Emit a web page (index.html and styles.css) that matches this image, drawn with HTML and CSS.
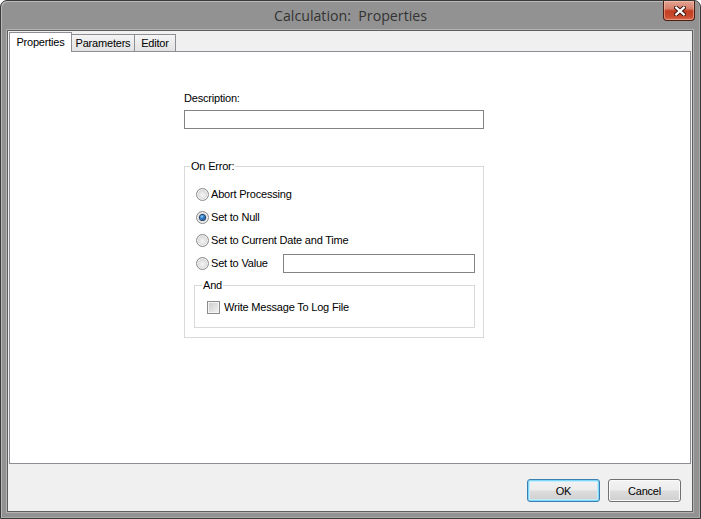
FILE: index.html
```html
<!DOCTYPE html>
<html>
<head>
<meta charset="utf-8">
<title>Calculation: Properties</title>
<link rel="stylesheet" href="styles.css">
</head>
<body>
<div class="window">
  <div class="titlebar">
    <div class="title">Calculation:&nbsp; Properties</div>
    <button class="close" aria-label="Close">
      <svg width="12" height="10" viewBox="0 0 12 10">
        <path d="M2.2 1.6 L9.8 8.4 M9.8 1.6 L2.2 8.4" stroke="#3a140c" stroke-width="4.2" stroke-linecap="square" fill="none"/>
        <path d="M2.2 1.6 L9.8 8.4 M9.8 1.6 L2.2 8.4" stroke="#ffffff" stroke-width="2.2" stroke-linecap="square" fill="none"/>
      </svg>
    </button>
  </div>
  <div class="client">
    <div class="tabs">
      <div class="tab active">Properties</div>
      <div class="tab params">Parameters</div>
      <div class="tab editor">Editor</div>
    </div>
    <div class="panel">
      <div class="form">
        <div class="lbl">Description:</div>
        <div class="textbox desc"></div>
        <fieldset class="group outer">
          <legend>On Error:</legend>
          <div class="radios">
            <div class="radio-row"><span class="radio"></span><span class="rtext">Abort Processing</span></div>
            <div class="radio-row"><span class="radio checked"></span><span class="rtext">Set to Null</span></div>
            <div class="radio-row"><span class="radio"></span><span class="rtext">Set to Current Date and Time</span></div>
            <div class="radio-row"><span class="radio"></span><span class="rtext">Set to Value</span><span class="textbox value"></span></div>
          </div>
          <fieldset class="group inner">
            <legend>And</legend>
            <div class="check-row"><span class="check"></span><span class="ctext">Write Message To Log File</span></div>
          </fieldset>
        </fieldset>
      </div>
    </div>
    <div class="footer">
      <button class="btn default">OK</button>
      <button class="btn">Cancel</button>
    </div>
  </div>
</div>
</body>
</html>
```

FILE: styles.css
```css
* { box-sizing: border-box; }
html, body { margin: 0; padding: 0; }
body {
  width: 701px;
  height: 519px;
  overflow: hidden;
  background: #ffffff;
  font-family: "Liberation Sans", Arial, sans-serif;
  font-size: 11px;
  letter-spacing: -0.2px;
  color: #000;
}

.window {
  width: 701px;
  height: 519px;
  border: 1px solid #3a3a3a;
  border-radius: 7px 7px 0 0;
  background: #929292;
  box-shadow: inset 1px 1px 0 #b9b9b9, inset -1px -1px 0 #a9a9a9;
  display: flex;
  flex-direction: column;
}

.titlebar {
  height: 29px;
  flex: none;
  display: grid;
  grid-template-columns: 1fr auto 1fr;
  align-items: start;
}
.title {
  grid-column: 2;
  font-family: "Open Sans", "Noto Sans", sans-serif;
  font-size: 14.2px;
  letter-spacing: 0;
  line-height: 30px;
  color: #333333;
  white-space: nowrap;
}
.close {
  grid-column: 3;
  justify-self: end;
  width: 32px;
  height: 20px;
  margin: 0 5px 0 0;
  padding: 0;
  border: 1px solid #4d1d14;
  border-top: none;
  border-radius: 0 0 4px 4px;
  background: linear-gradient(#e4a494 0%, #d6806c 40%, #c43e22 52%, #c94a2e 80%, #d86a4c 100%);
  box-shadow: inset 0 0 0 1px rgba(255, 210, 190, 0.45);
  display: flex;
  align-items: center;
  justify-content: center;
}
.close svg { display: block; margin-top: 1px; margin-left: 2px; }

.client {
  flex: 1;
  margin: 0 7px 6px 6px;
  border: 1px solid #5e5e5e;
  box-shadow: 0 0 0 1px #b3b3b3;
  background: #f0f0f0;
  display: flex;
  flex-direction: column;
}

.tabs {
  flex: none;
  display: flex;
  align-items: flex-end;
  padding: 1px 0 0 1px;
}
.tab {
  height: 17px;
  border: 1px solid #8c8e94;
  border-bottom: none;
  border-left: none;
  background: linear-gradient(#f4f4f4, #e2e2e2);
  line-height: 16px;
  text-align: center;
}
.tab.active {
  height: 20px;
  width: 63px;
  margin-bottom: -1px;
  border-left: 1px solid #8c8e94;
  background: #ffffff;
  position: relative;
  z-index: 1;
  line-height: 18px;
}
.tab.params { width: 63px; }
.tab.editor { width: 41px; }

.panel {
  flex: none;
  height: 413px;
  margin: 0 1px;
  border: 1px solid #8c8e94;
  background: #ffffff;
  padding: 40px 0 0 174px;
}

.form { width: 300px; }
.lbl { line-height: 13px; }
.textbox {
  display: block;
  height: 19px;
  border: 1px solid #838383;
  background: #ffffff;
}
.textbox.desc { margin-top: 5px; width: 300px; }

.group {
  margin: 0;
  min-width: 0;
  border: 1px solid #d9d9d9;
}
.group legend {
  padding: 0 1px;
  margin-left: 1px;
  line-height: 13px;
}
.group.outer {
  margin-top: 31px;
  width: 300px;
  padding: 10px 8px 9px 4px;
}
.radios {
  display: flex;
  flex-direction: column;
}
.radio-row {
  height: 23px;
  display: flex;
  align-items: center;
  padding-left: 7px;
}
.rtext { margin-left: 2px; line-height: 13px; }
.radio {
  width: 13px;
  height: 13px;
  flex: none;
  border-radius: 50%;
  border: 1px solid #8b8b8b;
  background: radial-gradient(circle at 50% 55%, #f6f6f6 0, #e4e4e4 3px, #cfcfcf 6px);
  box-shadow: inset 0 0 0 1px #f2f2f2;
  display: flex;
  align-items: center;
  justify-content: center;
}
.radio.checked::after {
  content: "";
  width: 5px;
  height: 5px;
  border-radius: 50%;
  background: radial-gradient(circle at 40% 35%, #9ad6ff 0, #2f86d6 1.6px, #0f4f95 3px);
  box-shadow: 0 0 0 1px #1c3f6a;
}
.textbox.value { width: 192px; margin-left: auto; }

.group.inner {
  margin-top: 4px;
  margin-left: 5px;
  padding: 8px 0 12px 6px;
}
.check-row {
  height: 15px;
  display: flex;
  align-items: center;
  padding-left: 6px;
}
.check {
  width: 13px;
  height: 13px;
  flex: none;
  border: 1px solid #8b8b8b;
  background: linear-gradient(135deg, #c9c9c9, #f5f5f5);
  box-shadow: inset 0 0 0 1px #f4f4f4;
}
.ctext { margin-left: 4px; line-height: 13px; }

.footer {
  flex: 1;
  display: flex;
  justify-content: flex-end;
  align-items: flex-start;
  gap: 8px;
  padding: 15px 11px 0 0;
}
.btn {
  width: 73px;
  height: 23px;
  padding: 0;
  border: 1px solid #707070;
  border-radius: 3px;
  background: linear-gradient(#f3f3f3 0%, #ececec 48%, #dddddd 52%, #cfcfcf 100%);
  box-shadow: inset 0 0 0 1px #fbfbfb;
  font-family: "Liberation Sans", Arial, sans-serif;
  font-size: 11px;
  letter-spacing: -0.2px;
  color: #000;
}
.btn.default {
  border-color: #3c7fb1;
  box-shadow: inset 0 0 0 1px #7fd6f6, inset 0 0 0 2px #c4edfb;
}
```
